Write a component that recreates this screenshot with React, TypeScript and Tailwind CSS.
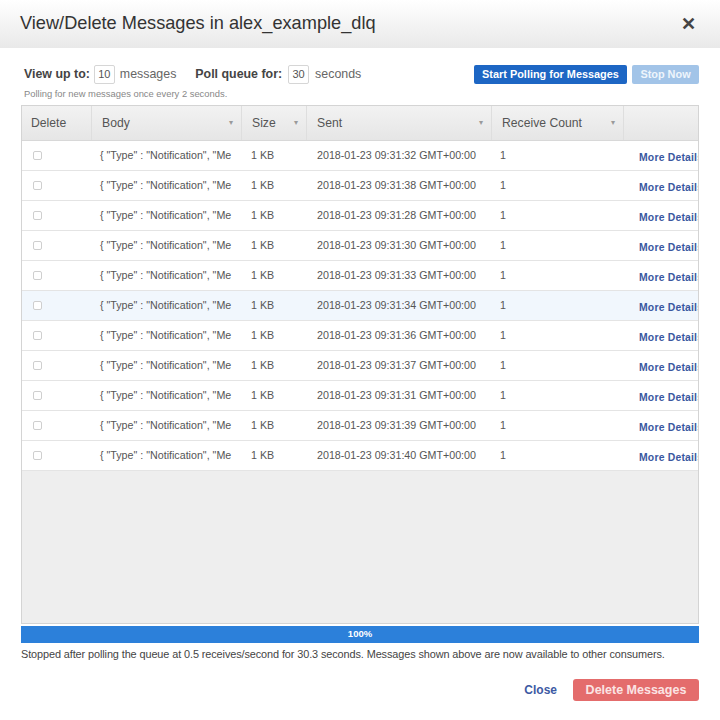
import React from "react";

const sentTimes = [
  "2018-01-23 09:31:32 GMT+00:00",
  "2018-01-23 09:31:38 GMT+00:00",
  "2018-01-23 09:31:28 GMT+00:00",
  "2018-01-23 09:31:30 GMT+00:00",
  "2018-01-23 09:31:33 GMT+00:00",
  "2018-01-23 09:31:34 GMT+00:00",
  "2018-01-23 09:31:36 GMT+00:00",
  "2018-01-23 09:31:37 GMT+00:00",
  "2018-01-23 09:31:31 GMT+00:00",
  "2018-01-23 09:31:39 GMT+00:00",
  "2018-01-23 09:31:40 GMT+00:00",
];

const cols = "grid grid-cols-[69px_150px_65px_185px_132px_1fr]";

function SortArrow() {
  return <span className="text-[8px] text-[#9a9a9a]">▾</span>;
}

function HeaderCell({ label, sort, first }: { label: string; sort?: boolean; first?: boolean }) {
  return (
    <div
      className={`flex items-center justify-between pr-[8px] ${first ? "pl-[9px]" : "pl-[10px] border-l border-[#dedede]"}`}
    >
      <span>{label}</span>
      {sort && <SortArrow />}
    </div>
  );
}

export default function App() {
  return (
    <div
      className="h-[720px] w-[720px] overflow-hidden bg-white text-[#333]"
      style={{ fontFamily: '"Liberation Sans", Arial, sans-serif' }}
    >
      {/* title bar */}
      <div className="flex h-[48px] items-center justify-between bg-gradient-to-b from-white to-[#e9e9e9] pl-[20px] pr-[24px]">
        <h1 className="text-[18.2px] text-[#333]">View/Delete Messages in alex_example_dlq</h1>
        <span className="text-[18px] font-bold text-[#444]">✕</span>
      </div>

      <div className="px-[21px]">
        {/* controls */}
        <div className="mt-[16px] flex h-[21px] items-center justify-between">
          <div className="flex items-center pl-[3px] text-[12.4px]">
            <span className="font-bold text-[#444]">View up to:</span>
            <span className="ml-[4px] flex h-[19px] w-[21px] items-center justify-center overflow-hidden rounded-[2px] border border-[#d6d6d6] text-[11px] text-[#555]">
              10
            </span>
            <span className="ml-[5px] text-[#666]">messages</span>
            <span className="ml-[19px] font-bold text-[#444]">Poll queue for:</span>
            <span className="ml-[6px] flex h-[19px] w-[21px] items-center justify-center rounded-[2px] border border-[#d6d6d6] text-[11px] text-[#555]">
              30
            </span>
            <span className="ml-[6px] text-[#666]">seconds</span>
          </div>
          <div className="flex items-center gap-[5px]">
            <button className="h-[19px] w-[153px] rounded-[2px] bg-[#1d66c4] text-[10.9px] font-bold text-white">
              Start Polling for Messages
            </button>
            <button className="h-[19px] w-[67px] rounded-[2px] bg-[#a2c4e8] text-[10.9px] font-bold text-[#eef5fc]">
              Stop Now
            </button>
          </div>
        </div>
        <div className="mt-[3px] pl-[3px] text-[9.4px] leading-[12px] text-[#888]">Polling for new messages once every 2 seconds.</div>

        {/* table */}
        <div className="mt-[5px] flex h-[519px] flex-col overflow-hidden border border-[#d4d4d4] bg-[#eeeeee]">
          <div className={`${cols} h-[35px] shrink-0 border-b border-[#d8d8d8] bg-gradient-to-b from-[#f2f2f2] to-[#e6e6e6] text-[12.2px] text-[#555]`}>
            <HeaderCell label="Delete" first />
            <HeaderCell label="Body" sort />
            <HeaderCell label="Size" sort />
            <HeaderCell label="Sent" sort />
            <HeaderCell label="Receive Count" sort />
            <div className="border-l border-[#dedede]" />
          </div>
          {sentTimes.map((t, i) => (
            <div
              key={i}
              className={`${cols} h-[30px] shrink-0 items-center border-b border-[#e4e4e4] text-[10.7px] text-[#555] ${i === 5 ? "bg-[#f1f7fd]" : "bg-white"}`}
            >
              <div className="pl-[11px]">
                <span className="block h-[9px] w-[9px] rounded-[2px] border border-[#cfcfcf] bg-white" />
              </div>
              <div className="overflow-hidden whitespace-nowrap pl-[9px]">{'{ "Type" : "Notification", "Me'}</div>
              <div className="pl-[10px]">1 KB</div>
              <div className="pl-[11px]">{t}</div>
              <div className="pl-[9px]">1</div>
              <div className="overflow-hidden whitespace-nowrap pl-[16px] pt-[4px] text-[10.4px] font-bold tracking-[0.2px] text-[#3a58a0]">
                More Details
              </div>
            </div>
          ))}
        </div>

        {/* progress */}
        <div className="mt-[2px] flex h-[17px] items-center justify-center bg-[#2c80da] text-[9.5px] font-bold text-white">
          100%
        </div>
        <div className="mt-[3px] whitespace-nowrap text-[10.9px] tracking-[-0.1px] text-[#444]">
          Stopped after polling the queue at 0.5 receives/second for 30.3 seconds. Messages shown above are now available to other consumers.
        </div>

        {/* footer */}
        <div className="mt-[17px] flex items-center justify-end gap-[16px]">
          <span className="text-[12px] font-bold text-[#3d5aa3]">Close</span>
          <button className="h-[22px] w-[126px] rounded-[3px] bg-[#e46c6c] text-[12.5px] font-bold text-[#fbe4e4]">
            Delete Messages
          </button>
        </div>
      </div>
    </div>
  );
}
